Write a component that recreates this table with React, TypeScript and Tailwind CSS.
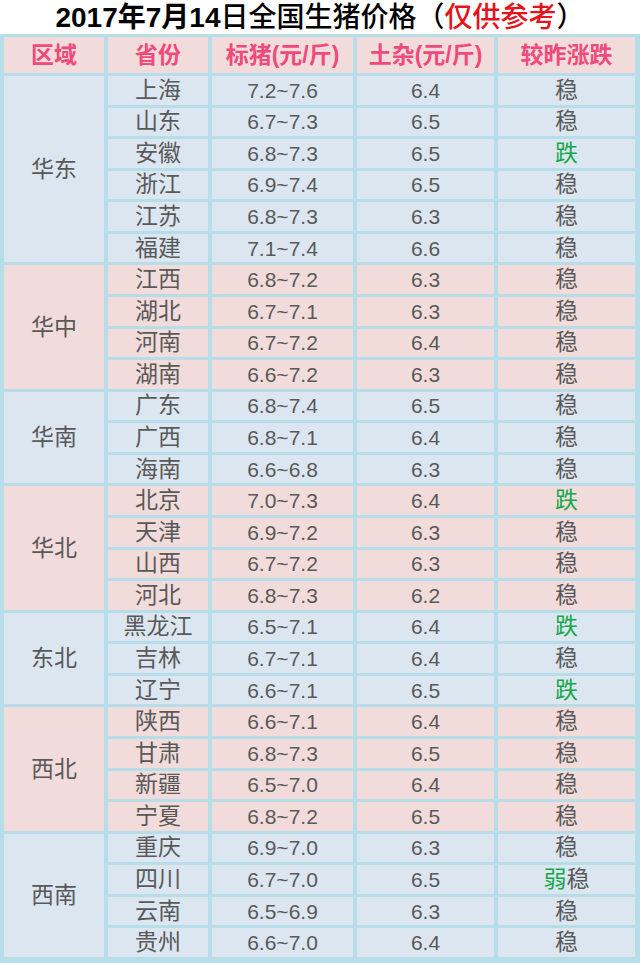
import React from "react";

type Row = [string, string, string, string];
type Section = { region: string; rows: Row[] };

const sections: Section[] = [
  {
    region: "华东",
    rows: [
      ["上海", "7.2~7.6", "6.4", "稳"],
      ["山东", "6.7~7.3", "6.5", "稳"],
      ["安徽", "6.8~7.3", "6.5", "跌"],
      ["浙江", "6.9~7.4", "6.5", "稳"],
      ["江苏", "6.8~7.3", "6.3", "稳"],
      ["福建", "7.1~7.4", "6.6", "稳"],
    ],
  },
  {
    region: "华中",
    rows: [
      ["江西", "6.8~7.2", "6.3", "稳"],
      ["湖北", "6.7~7.1", "6.3", "稳"],
      ["河南", "6.7~7.2", "6.4", "稳"],
      ["湖南", "6.6~7.2", "6.3", "稳"],
    ],
  },
  {
    region: "华南",
    rows: [
      ["广东", "6.8~7.4", "6.5", "稳"],
      ["广西", "6.8~7.1", "6.4", "稳"],
      ["海南", "6.6~6.8", "6.3", "稳"],
    ],
  },
  {
    region: "华北",
    rows: [
      ["北京", "7.0~7.3", "6.4", "跌"],
      ["天津", "6.9~7.2", "6.3", "稳"],
      ["山西", "6.7~7.2", "6.3", "稳"],
      ["河北", "6.8~7.3", "6.2", "稳"],
    ],
  },
  {
    region: "东北",
    rows: [
      ["黑龙江", "6.5~7.1", "6.4", "跌"],
      ["吉林", "6.7~7.1", "6.4", "稳"],
      ["辽宁", "6.6~7.1", "6.5", "跌"],
    ],
  },
  {
    region: "西北",
    rows: [
      ["陕西", "6.6~7.1", "6.4", "稳"],
      ["甘肃", "6.8~7.3", "6.5", "稳"],
      ["新疆", "6.5~7.0", "6.4", "稳"],
      ["宁夏", "6.8~7.2", "6.5", "稳"],
    ],
  },
  {
    region: "西南",
    rows: [
      ["重庆", "6.9~7.0", "6.3", "稳"],
      ["四川", "6.7~7.0", "6.5", "弱稳"],
      ["云南", "6.5~6.9", "6.3", "稳"],
      ["贵州", "6.6~7.0", "6.4", "稳"],
    ],
  },
];

const spanClass: Record<number, string> = {
  3: "row-span-3",
  4: "row-span-4",
  6: "row-span-6",
};

const font = {
  fontFamily: '"Liberation Sans", "Noto Sans CJK SC", sans-serif',
};

function Trend({ v }: { v: string }) {
  if (v === "跌") return <span className="text-[#13a84c]">跌</span>;
  if (v === "弱稳")
    return (
      <span>
        <span className="text-[#13a84c]">弱</span>稳
      </span>
    );
  return <span>{v}</span>;
}

export default function App() {
  const headers = ["区域", "省份", "标猪(元/斤)", "土杂(元/斤)", "较昨涨跌"];
  return (
    <div className="w-[640px] h-[963px] bg-white flex flex-col" style={font}>
      <div className="h-[34px] flex items-center justify-center text-[28px] leading-none text-black pt-[1px]">
        <span className="font-bold">2017年7月14</span>
        <span className="font-medium">日全国生猪价格（</span>
        <span className="font-medium text-[#e5131a]">仅供参考</span>
        <span className="font-medium">）</span>
      </div>
      <div className="flex-1 grid grid-cols-[100px_100px_141px_137px_137px] grid-rows-[36px_repeat(28,minmax(0,1fr))] gap-x-[4px] gap-y-[3px] bg-[#b7dee8] pt-[3px] pb-[6px] pl-[4px] pr-[5px]">
        {headers.map((h) => (
          <div
            key={h}
            className="bg-[#f2dcdb] flex items-center justify-center text-[23px] font-bold text-[#ef4a7b] leading-none"
          >
            {h}
          </div>
        ))}
        {sections.map((s, si) => {
          const bg = si % 2 === 0 ? "bg-[#dce6f1]" : "bg-[#f2dcdb]";
          return (
            <React.Fragment key={s.region}>
              <div
                className={`${spanClass[s.rows.length]} ${bg} flex items-center justify-center text-[23px] text-[#595959] leading-none`}
              >
                {s.region}
              </div>
              {s.rows.map((r) => (
                <React.Fragment key={r[0]}>
                  <div
                    className={`${bg} flex items-center justify-center text-[23px] text-[#595959] leading-none`}
                  >
                    {r[0]}
                  </div>
                  <div
                    className={`${bg} flex items-center justify-center text-[21px] text-[#595959] leading-none`}
                  >
                    {r[1]}
                  </div>
                  <div
                    className={`${bg} flex items-center justify-center text-[21px] text-[#595959] leading-none`}
                  >
                    {r[2]}
                  </div>
                  <div
                    className={`${bg} flex items-center justify-center text-[23px] text-[#595959] leading-none`}
                  >
                    <Trend v={r[3]} />
                  </div>
                </React.Fragment>
              ))}
            </React.Fragment>
          );
        })}
      </div>
    </div>
  );
}
